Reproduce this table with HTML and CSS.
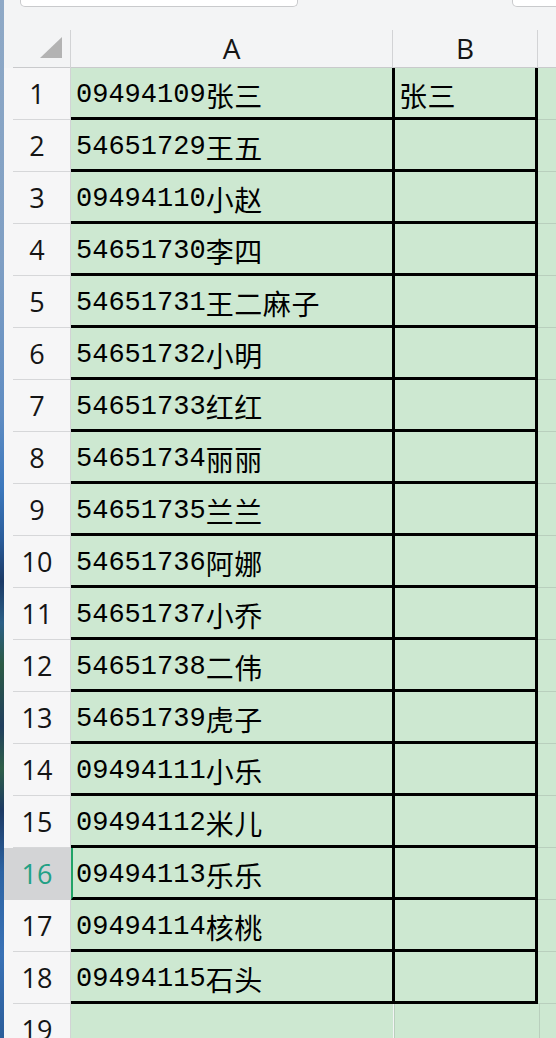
FILE: index.html
```html
<!DOCTYPE html>
<html lang="zh">
<head>
<meta charset="utf-8">
<title>Sheet</title>
<link rel="stylesheet" href="styles.css">
</head>
<body>
<div class="app">
  <div class="wallpaper"></div>
  <div class="main">
    <div class="toolbar">
      <div class="field name-box"></div>
      <div class="field formula-box"></div>
    </div>
    <div class="head-row">
      <div class="corner">
        <svg width="22" height="21" viewBox="0 0 22 21"><polygon points="22,0 22,21 0,21" fill="#b3b3b3"/></svg>
      </div>
      <div class="ch ch-a">A</div>
      <div class="ch ch-b">B</div>
      <div class="ch ch-c"></div>
    </div>

    <div class="row"><div class="rh">1</div><div class="cell a"><span class="num">09494109</span><span class="nm">张三</span></div><div class="cell b"><span class="nm">张三</span></div><div class="cell c"></div></div>
    <div class="row"><div class="rh">2</div><div class="cell a"><span class="num">54651729</span><span class="nm">王五</span></div><div class="cell b"></div><div class="cell c"></div></div>
    <div class="row"><div class="rh">3</div><div class="cell a"><span class="num">09494110</span><span class="nm">小赵</span></div><div class="cell b"></div><div class="cell c"></div></div>
    <div class="row"><div class="rh">4</div><div class="cell a"><span class="num">54651730</span><span class="nm">李四</span></div><div class="cell b"></div><div class="cell c"></div></div>
    <div class="row"><div class="rh">5</div><div class="cell a"><span class="num">54651731</span><span class="nm">王二麻子</span></div><div class="cell b"></div><div class="cell c"></div></div>
    <div class="row"><div class="rh">6</div><div class="cell a"><span class="num">54651732</span><span class="nm">小明</span></div><div class="cell b"></div><div class="cell c"></div></div>
    <div class="row"><div class="rh">7</div><div class="cell a"><span class="num">54651733</span><span class="nm">红红</span></div><div class="cell b"></div><div class="cell c"></div></div>
    <div class="row"><div class="rh">8</div><div class="cell a"><span class="num">54651734</span><span class="nm">丽丽</span></div><div class="cell b"></div><div class="cell c"></div></div>
    <div class="row"><div class="rh">9</div><div class="cell a"><span class="num">54651735</span><span class="nm">兰兰</span></div><div class="cell b"></div><div class="cell c"></div></div>
    <div class="row"><div class="rh">10</div><div class="cell a"><span class="num">54651736</span><span class="nm">阿娜</span></div><div class="cell b"></div><div class="cell c"></div></div>
    <div class="row"><div class="rh">11</div><div class="cell a"><span class="num">54651737</span><span class="nm">小乔</span></div><div class="cell b"></div><div class="cell c"></div></div>
    <div class="row"><div class="rh">12</div><div class="cell a"><span class="num">54651738</span><span class="nm">二伟</span></div><div class="cell b"></div><div class="cell c"></div></div>
    <div class="row"><div class="rh">13</div><div class="cell a"><span class="num">54651739</span><span class="nm">虎子</span></div><div class="cell b"></div><div class="cell c"></div></div>
    <div class="row"><div class="rh">14</div><div class="cell a"><span class="num">09494111</span><span class="nm">小乐</span></div><div class="cell b"></div><div class="cell c"></div></div>
    <div class="row"><div class="rh">15</div><div class="cell a"><span class="num">09494112</span><span class="nm">米儿</span></div><div class="cell b"></div><div class="cell c"></div></div>
    <div class="row active"><div class="rh">16</div><div class="cell a"><span class="num">09494113</span><span class="nm">乐乐</span></div><div class="cell b"></div><div class="cell c"></div></div>
    <div class="row"><div class="rh">17</div><div class="cell a"><span class="num">09494114</span><span class="nm">核桃</span></div><div class="cell b"></div><div class="cell c"></div></div>
    <div class="row"><div class="rh">18</div><div class="cell a"><span class="num">09494115</span><span class="nm">石头</span></div><div class="cell b"></div><div class="cell c"></div></div>
    <div class="row plain"><div class="rh">19</div><div class="cell a"></div><div class="cell b"></div><div class="cell c"></div></div>
  </div>
</div>
</body>
</html>
```

FILE: styles.css
```css
html, body {
  margin: 0;
  padding: 0;
  height: 100%;
  overflow: hidden;
  background: #f3f4f5;
}

.app {
  display: flex;
  width: 556px;
  height: 1038px;
  overflow: hidden;
}

.wallpaper {
  width: 4px;
  flex: none;
  background: linear-gradient(to bottom,
    #8fa9c6 0%, #7f9fc4 25%, #5f8cc2 40%, #3c78bd 47%,
    #2a5c9a 52%, #1c3a66 56%, #2b5f86 60%, #2c5a44 64%,
    #213f5e 70%, #2f5f48 74%, #1d3a63 78%, #2c63a3 84%,
    #3a72b6 92%, #2b5d9a 100%);
}

.main {
  flex: 1;
  display: flex;
  flex-direction: column;
  min-width: 0;
}

/* top formula bar remnant */
.toolbar {
  height: 30px;
  flex: none;
  display: flex;
  align-items: flex-start;
  overflow: hidden;
  background: #f3f4f5;
}

.field {
  flex: none;
  height: 7px;
  background: #ffffff;
  border: 1px solid #c9cacc;
  border-top: none;
  border-radius: 0 0 5px 5px;
  box-sizing: border-box;
}

.name-box {
  margin-left: 16px;
  width: 278px;
}

.formula-box {
  margin-left: 214px;
  width: 60px;
}

/* column header */
.head-row {
  height: 38px;
  flex: none;
  display: flex;
  background: #f3f4f5;
}

.corner {
  width: 67px;
  flex: none;
  box-sizing: border-box;
  border-right: 1px solid #d2d3d5;
  display: flex;
  justify-content: flex-end;
  align-items: flex-end;
  padding: 0 8px 10px 0;
  background: linear-gradient(#c9cacc, #c9cacc) no-repeat 9px 100% / calc(100% - 9px) 1px;
}

.corner svg {
  display: block;
}

.ch {
  box-sizing: border-box;
  border-bottom: 1px solid #c9cacc;
  display: flex;
  align-items: center;
  justify-content: center;
  font-family: "Open Sans", "Noto Sans", sans-serif;
  font-size: 28px;
  color: #151515;
  padding-bottom: 2px;
}

.ch-a {
  width: 322px;
  flex: none;
  border-right: 1px solid #d2d3d5;
}

.ch-b {
  width: 145px;
  flex: none;
  border-right: 1px solid #d2d3d5;
}

.ch-c {
  flex: 1;
}

/* rows */
.row {
  height: 52px;
  flex: none;
  display: flex;
}

.rh {
  width: 67px;
  flex: none;
  box-sizing: border-box;
  border-right: 1px solid #d2d3d5;
  background: #f6f6f7 linear-gradient(#d6d7d9, #d6d7d9) no-repeat 9px 100% / calc(100% - 9px) 1px;
  display: flex;
  align-items: center;
  justify-content: center;
  padding: 0 0 2px 0;
  font-family: "Open Sans", "Noto Sans", sans-serif;
  font-size: 27px;
  color: #151515;
}

.cell {
  box-sizing: border-box;
  background: #cde8d1;
  display: flex;
  align-items: center;
  white-space: nowrap;
  overflow: hidden;
  color: #000;
  padding-top: 4px;
}

.cell.a {
  width: 322px;
  flex: none;
  padding-left: 5px;
  border-bottom: 3px solid #000;
}

.cell.b {
  width: 146px;
  flex: none;
  margin-left: -1px;
  padding-left: 4px;
  border-left: 3px solid #000;
  border-right: 3px solid #000;
  border-bottom: 3px solid #000;
}

.cell.c {
  flex: 1;
  border-bottom: 1px solid #b9cfbd;
}

.num {
  font-family: "Liberation Mono", "DejaVu Sans Mono", monospace;
  font-size: 27px;
}

.nm {
  font-family: "Noto Sans CJK SC", "Noto Sans", sans-serif;
  font-size: 28px;
  line-height: 1;
  letter-spacing: 0.6px;
}

/* active row */
.row.active .rh {
  background: #d3d4d6;
  color: #22a085;
}

.row.active .cell.a {
  border-left: 2px solid #21a366;
  padding-left: 3px;
}

/* row without borders */
.row.plain .cell.a {
  border-bottom: 1px solid #b9cfbd;
}

.row.plain .cell.b {
  border-left: 1px solid #b9cfbd;
  border-right: 1px solid #b9cfbd;
  border-bottom: 1px solid #b9cfbd;
  margin-left: 1px;
}
```
